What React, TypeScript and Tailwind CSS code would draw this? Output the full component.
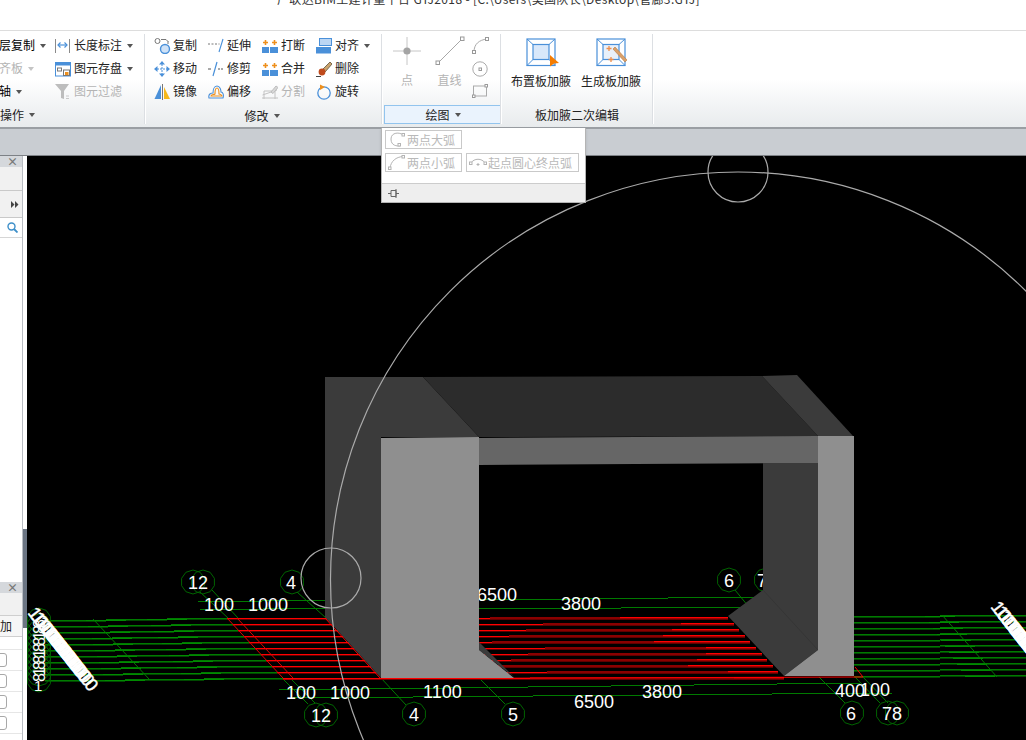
import React from "react";

const B = "#4a90d9";
const O = "#ee8f1c";

function Ic({ children, w = 16, h = 16 }: { children: React.ReactNode; w?: number; h?: number }) {
  return (
    <svg width={w} height={h} viewBox={`0 0 ${w} ${h}`} fill="none" className="shrink-0 block">
      {children}
    </svg>
  );
}

const icons: Record<string, React.ReactNode> = {
  len: (
    <Ic>
      <path d="M0.5 1v14M14.5 1v14" stroke="#8a8a8a" />
      <path d="M3 7h9" stroke={B} strokeWidth="1.2" />
      <path d="M5.5 4.5L3 7l2.5 2.5M9.5 4.5L12 7l-2.5 2.5" stroke={B} strokeWidth="1.2" />
    </Ic>
  ),
  save: (
    <Ic>
      <rect x="0.5" y="1.5" width="15" height="13.5" fill="#fff" stroke={B} />
      <rect x="0.5" y="1.5" width="15" height="3" fill={B} />
      <rect x="2.5" y="7" width="4" height="3" stroke="#777" />
      <rect x="8.5" y="9" width="6" height="5.5" fill="#fff" stroke="#777" />
      <rect x="10" y="11" width="3.5" height="3" fill={O} />
    </Ic>
  ),
  filter: (
    <Ic>
      <path d="M0 0h14L9 7v8L6 14V7z" fill="#bdbdbd" />
      <path d="M11 12h3M11 14.5h3" stroke="#c8c8c8" />
    </Ic>
  ),
  copy: (
    <Ic w={18} h={16}>
      <circle cx="3.5" cy="3" r="2.5" fill="#fff" stroke="#777" />
      <circle cx="11" cy="11" r="4.5" fill="#cfe2f7" stroke={B} strokeWidth="1.4" />
      <path d="M7 1.5h5l2 2M14 3v3" stroke="#777" />
    </Ic>
  ),
  move: (
    <Ic>
      <path d="M8 3v10M3 8h10" stroke={B} strokeWidth="1" strokeDasharray="2 1" />
      <path d="M8 0l3 3.5H5zM8 16l3-3.5H5zM0 8l3.5-3v6zM16 8l-3.5-3v6z" fill={B} />
    </Ic>
  ),
  mirror: (
    <Ic>
      <path d="M7 1L0.5 15H7z" fill={B} />
      <path d="M10 3l6 12h-6z" fill="#f5b81c" />
      <path d="M8.5 0v16" stroke="#777" />
    </Ic>
  ),
  extend: (
    <Ic>
      <path d="M0 6h2M3.5 6h2M7 6h2M10.5 6h1" stroke="#777" />
      <path d="M15 1l-4 13" stroke={B} strokeWidth="1.1" />
    </Ic>
  ),
  trim: (
    <Ic>
      <path d="M0 8h3M10 8h2M13 8h2" stroke="#555" />
      <path d="M9 1L5 15" stroke={B} strokeWidth="1.2" />
    </Ic>
  ),
  offset: (
    <Ic>
      <path d="M1 14c-1-4 2-5 4-5 0-3 1-7 4-7s4 4 4 6c2 0 3 3 2 6z" stroke={B} strokeWidth="1.1" />
      <path d="M3 12c0-2 3-1 4-2 0-2 0-6 2-6s2 4 2 6c1 0 3 1 3 2z" stroke={O} strokeWidth="1.1" />
    </Ic>
  ),
  brk: (
    <Ic>
      <rect x="0" y="9" width="7" height="6" fill={B} />
      <rect x="8" y="9" width="8" height="6" fill={B} />
      <path d="M3.5 2v5M1 4.5h5M12.5 2v5M10 4.5h5" stroke={O} strokeWidth="1.6" />
    </Ic>
  ),
  split: (
    <Ic>
      <path d="M0.5 11L15 6M2 15V7h11v8M0 14h16" stroke="#c2c2c2" />
      <path d="M9 8l5-6 2 1.5-5 6z" fill="#d8d8d8" stroke="#bdbdbd" />
    </Ic>
  ),
  align: (
    <Ic>
      <rect x="3.5" y="0.5" width="12" height="7" fill="#bcd6f3" stroke={B} />
      <rect x="0" y="9" width="15" height="6.5" fill={B} />
    </Ic>
  ),
  del: (
    <Ic>
      <path d="M6 9l8-8 2 2-7 8z" fill="#caa36c" stroke="#7a6a50" />
      <circle cx="6" cy="11" r="3.4" fill="#bf4a1c" />
      <path d="M0 15.5h5" stroke="#444" />
    </Ic>
  ),
  rotate: (
    <Ic>
      <circle cx="8" cy="9" r="6.2" stroke={B} strokeWidth="1.3" />
      <path d="M4 0.5l5 2.5-5 3z" fill={O} />
    </Ic>
  ),
};

function Arrow({ light, className = "" }: { light?: boolean; className?: string }) {
  return (
    <span
      className={`inline-block w-0 h-0 border-x-[3.5px] border-x-transparent border-t-[4px] ${
        light ? "border-t-[#c4c4c4]" : "border-t-[#555]"
      } ${className}`}
    />
  );
}

function Tool({ icon, label, arrow, off }: { icon: string; label: string; arrow?: boolean; off?: boolean }) {
  return (
    <div className="flex items-center h-[23px]">
      <span className="w-[19px] shrink-0">{icons[icon]}</span>
      <span className={`-mt-[2px] ${off ? "text-[#b4b4b4]" : "text-[#222]"}`}>{label}</span>
      {arrow && <Arrow className="ml-[5px]" />}
    </div>
  );
}

function Sep() {
  return <div className="w-[2px] shrink-0 my-[3px] bg-[#dcdfe3] border-r border-white" />;
}

function Caption({ children, arrow }: { children: React.ReactNode; arrow?: boolean }) {
  return (
    <div className="h-[25px] flex items-center justify-center gap-[5px] text-[#222]">
      <span>{children}</span>
      {arrow && <Arrow />}
    </div>
  );
}

function Title() {
  return (
    <div className="h-[31px] bg-white border-b border-[#dddddd] overflow-hidden">
      <div className="pl-[277px] -mt-[10px] h-[18px] leading-[18px] text-[12px] tracking-[0.35px] text-[#333] whitespace-nowrap">
        广联达BIM土建计量平台 GTJ2018 - [C:\Users\美国队长\Desktop\管廊3.GTJ]
      </div>
    </div>
  );
}

function Ribbon() {
  return (
    <div className="relative h-[98px] flex bg-linear-to-b from-white from-50% to-[#e8ebed] border-b-2 border-[#9a9ea3]">
      {/* 操作 */}
      <div className="w-[144px] shrink-0 flex flex-col overflow-hidden">
        <div className="flex-1 flex pt-[3px]">
          <div className="w-[55px] -ml-[1px] shrink-0">
            <div className="flex items-center h-[23px]">
              <span className="-mt-[2px]">层复制</span>
              <Arrow className="ml-[5px]" />
            </div>
            <div className="flex items-center h-[23px] text-[#b4b4b4]">
              <span className="-mt-[2px]">齐板</span>
              <Arrow light className="ml-[5px]" />
            </div>
            <div className="flex items-center h-[23px]">
              <span className="-mt-[2px]">轴</span>
              <Arrow className="ml-[5px]" />
            </div>
          </div>
          <div className="ml-[1px]">
            <Tool icon="len" label="长度标注" arrow />
            <Tool icon="save" label="图元存盘" arrow />
            <Tool icon="filter" label="图元过滤" off />
          </div>
        </div>
        <div className="h-[25px] flex items-center gap-[5px] text-[#222]">
          <span>操作</span>
          <Arrow />
        </div>
      </div>
      <Sep />
      {/* 修改 */}
      <div className="w-[235px] shrink-0 flex flex-col">
        <div className="flex-1 grid grid-cols-[54px_54px_54px_1fr] pl-[8px] pt-[3px] content-start">
          <Tool icon="copy" label="复制" />
          <Tool icon="extend" label="延伸" />
          <Tool icon="brk" label="打断" />
          <Tool icon="align" label="对齐" arrow />
          <Tool icon="move" label="移动" />
          <Tool icon="trim" label="修剪" />
          <Tool icon="brk" label="合并" />
          <Tool icon="del" label="删除" />
          <Tool icon="mirror" label="镜像" />
          <Tool icon="offset" label="偏移" />
          <Tool icon="split" label="分割" off />
          <Tool icon="rotate" label="旋转" />
        </div>
        <div className="pr-[3px]">
          <Caption arrow>修改</Caption>
        </div>
      </div>
      <Sep />
      {/* 绘图 */}
      <div className="w-[117px] shrink-0 flex flex-col">
        <div className="flex-1 flex">
          <div className="w-[48px] flex flex-col items-center pt-[5px]">
            <svg width="30" height="30" viewBox="0 0 30 30" fill="none" className="block">
              <path d="M15 1v28M1 15h28" stroke="#c6c6c6" />
              <circle cx="15" cy="15" r="3.6" fill="#a4a4a4" />
            </svg>
            <span className="text-[#b4b4b4] mt-[8px]">点</span>
          </div>
          <div className="w-[37px] flex flex-col items-center pt-[5px]">
            <svg width="30" height="30" viewBox="0 0 30 30" fill="none" className="block">
              <path d="M3 27L27 3" stroke="#a8a8a8" />
              <rect x="1" y="25" width="3.5" height="3.5" fill="#fff" stroke="#999" />
              <rect x="25.5" y="1" width="3.5" height="3.5" fill="#fff" stroke="#999" />
            </svg>
            <span className="text-[#b4b4b4] mt-[8px]">直线</span>
          </div>
          <div className="flex flex-col items-center w-[18px] pt-[6px] gap-[7px] ml-[3px]">
            <svg width="17" height="17" viewBox="0 0 17 17" fill="none" className="block">
              <path d="M2 15C2 7 7 3 15 2" stroke="#aaa" />
              <rect x="0.5" y="13.5" width="3" height="3" fill="#fff" stroke="#999" />
              <rect x="13.5" y="0.5" width="3" height="3" fill="#fff" stroke="#999" />
            </svg>
            <svg width="16" height="16" viewBox="0 0 16 16" fill="none" className="block">
              <circle cx="8" cy="8" r="7.2" stroke="#aaa" />
              <rect x="7" y="7" width="2.5" height="2.5" fill="#fff" stroke="#999" />
            </svg>
            <svg width="16" height="14" viewBox="0 0 16 14" fill="none" className="block">
              <rect x="1.5" y="2" width="13" height="10" stroke="#aaa" />
              <rect x="0.5" y="11" width="2.5" height="2.5" fill="#fff" stroke="#999" />
              <rect x="13" y="0.5" width="2.5" height="2.5" fill="#fff" stroke="#999" />
            </svg>
          </div>
        </div>
        <div className="h-[19px] mb-[3px] ml-[1px] -mr-[2px] flex items-center justify-center gap-[5px] bg-[#eaf3fd] border border-[#92c4ee] text-[#222]">
          <span>绘图</span>
          <Arrow />
        </div>
      </div>
      <Sep />
      {/* 板加腋 */}
      <div className="w-[150px] shrink-0 flex flex-col">
        <div className="flex-1 flex pl-[9px] gap-[10px]">
          <BigTool label="布置板加腋" kind="cursor" />
          <BigTool label="生成板加腋" kind="wand" />
        </div>
        <Caption>板加腋二次编辑</Caption>
      </div>
      <Sep />
      {/* 下拉面板 */}
      <div className="absolute left-[381px] top-[97px] w-[205px] h-[75px] bg-white border border-[#b4b4b4] border-t-0 shadow-sm flex flex-col text-[#b9b9b9] z-10">
        <div className="flex-1 pl-[3px] pt-[2px]">
          <Arc icon="big" label="两点大弧" className="w-[77px]" />
          <div className="flex gap-[4px] mt-[4px]">
            <Arc icon="small" label="两点小弧" className="w-[77px]" />
            <Arc icon="mid" label="起点圆心终点弧" className="w-[113px]" />
          </div>
        </div>
        <div className="h-[19px] bg-[#eeeeee] border-t border-[#cccccc] flex items-center pl-[6px]">
          <svg width="11" height="11" viewBox="0 0 11 11" fill="none" className="block">
            <path d="M0 5.5h3M3 2.5v6M3 2.5h5v6H3M8 1v9M8 5.5h3" stroke="#666" />
          </svg>
        </div>
      </div>
    </div>
  );
}

function Arc({ icon, label, className }: { icon: string; label: string; className: string }) {
  return (
    <div className={`h-[19px] flex items-center border border-[#c9c9c9] pl-[2px] gap-[1px] ${className}`}>
      <svg width="18" height="15" viewBox="0 0 18 15" fill="none" className="shrink-0 block">
        {icon === "big" && (
          <g stroke="#b4b4b4">
            <path d="M15 3C12 0 3 0 3 7s6 7 9 7" />
            <rect x="14" y="1.5" width="2.5" height="2.5" fill="#fff" />
            <rect x="10" y="11.5" width="2.5" height="2.5" fill="#fff" />
          </g>
        )}
        {icon === "small" && (
          <g stroke="#b4b4b4">
            <path d="M2 13C3 6 8 2 15 1.5" />
            <rect x="0.5" y="12" width="2.5" height="2.5" fill="#fff" />
            <rect x="14" y="0.5" width="2.5" height="2.5" fill="#fff" />
          </g>
        )}
        {icon === "mid" && (
          <g stroke="#b4b4b4">
            <path d="M2 8C5 3 13 3 16 8" />
            <rect x="0.5" y="7" width="2.5" height="2.5" fill="#fff" />
            <rect x="15" y="7" width="2.5" height="2.5" fill="#fff" />
            <path d="M9 8v3M7.5 9.5h3" />
          </g>
        )}
      </svg>
      <span className="whitespace-nowrap">{label}</span>
    </div>
  );
}

function BigTool({ label, kind }: { label: string; kind: "cursor" | "wand" }) {
  return (
    <div className="w-[60px] flex flex-col items-center pt-[7px]">
      <svg width="34" height="30" viewBox="0 0 34 30" fill="none" className="block ml-[3px]">
        <rect x="1" y="1" width="28" height="26.5" fill="#fff" stroke={B} strokeWidth="1.2" />
        <rect x="7" y="6.5" width="16" height="15" fill={kind === "cursor" ? "#d9e8fa" : "#e8f0fa"} stroke={B} strokeWidth="1.2" />
        <path d="M1 1l6 5.5M29 1l-6 5.5M1 27.5l6-6M29 27.5l-6-6" stroke={B} />
        {kind === "cursor" ? (
          <path d="M24 17l9 8-5 .5-4 3z" fill="#f57c00" />
        ) : (
          <g>
            <path d="M17 11l2-2 12 13-2 2z" fill="#d9a06a" stroke="#b97a3f" strokeWidth="0.6" />
            <path d="M13 8v5M10.500 10.500h5M15 19v5M12.500 21.500h5" stroke="#ee8f4c" strokeWidth="1.3" />
          </g>
        )}
      </svg>
      <span className="text-[#222] mt-[7px] whitespace-nowrap">{label}</span>
    </div>
  );
}

function LeftPanel() {
  return (
    <div className="w-[27px] shrink-0 flex bg-white">
      <div className="w-[23px] shrink-0 border-r border-[#b9bdc3] flex flex-col overflow-hidden">
        <div className="h-[11px] bg-[#d5d8dc] flex items-center justify-end pr-[4px] text-[#777] text-[11px] leading-none font-bold">×</div>
        <div className="h-[24px] bg-[#f1f1f1] border-b border-[#c9c9c9]" />
        <div className="h-[27px] bg-[#f1f1f1] border-b border-[#c9c9c9] flex items-center justify-end pr-[3px]">
          <svg width="8" height="7" viewBox="0 0 8 7" className="block">
            <path d="M0 0l3.500 3.500L0 7zM4 0l3.500 3.500L4 7z" fill="#444" />
          </svg>
        </div>
        <div className="h-[20px] bg-white border-b border-[#d6d6d6] flex items-center justify-end pr-[4px]">
          <svg width="11" height="11" viewBox="0 0 11 11" fill="none" className="block">
            <circle cx="4.500" cy="4.500" r="3.500" stroke="#3d8fc9" strokeWidth="1.4" />
            <path d="M7 7l3.500 3.500" stroke="#3d8fc9" strokeWidth="1.8" />
          </svg>
        </div>
        <div className="h-[343px] bg-white" />
        <div className="h-[11px] bg-[#d5d8dc] mt-[1px] flex items-center justify-end pr-[4px] text-[#777] text-[11px] leading-none font-bold">×</div>
        <div className="h-[22px] bg-[#f1f1f1]" />
        <div className="h-[22px] bg-[#f6f6f6] border-y border-[#cfcfcf] flex items-center text-[#222] pr-[2px]">
          <span>加</span>
        </div>
        <div className="h-[13px] border-b border-[#e6e6e6]" />
        {[0, 1, 2, 3].map((k) => (
          <div key={k} className="h-[21px] border-b border-[#e6e6e6] flex items-center">
            <span className="block w-[20px] h-[14px] -ml-[13px] bg-white border border-[#a8a8a8] rounded-[3px]" />
          </div>
        ))}
      </div>
      <div className="flex-1 flex flex-col">
        <div className="h-[373px]" />
        <div className="h-[99px] bg-[#6b7583]" />
      </div>
    </div>
  );
}

function deca(cx: number, cy: number, r: number) {
  const p: string[] = [];
  for (let i = 0; i < 10; i++) {
    const a = (i * Math.PI) / 5 + Math.PI / 10;
    p.push(`${(cx + r * Math.cos(a)).toFixed(1)},${(cy + r * Math.sin(a)).toFixed(1)}`);
  }
  return p.join(" ");
}

function Bubble({ x, y, r = 12 }: { x: number; y: number; r?: number }) {
  return <polygon points={deca(x, y, r)} fill="none" stroke="#006400" strokeWidth="1" />;
}

function Lb({ x, y, t, size = 18 }: { x: number; y: number; t: string; size?: number }) {
  return (
    <text x={x} y={y} fill="#fff" fontSize={size} fontFamily="'Liberation Sans', sans-serif">
      {t}
    </text>
  );
}

const range = (n: number) => Array.from({ length: n }, (_, i) => i);

// 近水平线：按整数行分段，得到无抗锯齿的阶梯线
function steps(x0: number, y0: number, x1: number, y1: number) {
  const n = Math.max(1, Math.abs(Math.round(y1 - y0)) + 1);
  const w = (x1 - x0) / n;
  let d = "";
  for (let i = 0; i < n; i++) {
    const y = Math.round(y0 + ((y1 - y0) * i) / Math.max(1, n - 1)) + 0.5;
    d += `M${(x0 + w * i).toFixed(0)} ${y}H${(x0 + w * (i + 1)).toFixed(0)}`;
  }
  return d;
}

function Canvas() {
  const green = "#007a00";
  const shade = "#004800";
  const bright = "#008a00";
  return (
    <div className="flex-1 bg-black overflow-hidden">
      <svg width="999" height="584" viewBox="27 156 999 584" className="block">
        {/* 左侧绿色钢筋线 */}
        {range(11).map((i) => {
          const y = 620 + i * 6;
          const xe = 228 + i * 5.6;
          const t = 45 + (xe - 45) / 3;
          return (
            <g key={`lg${i}`} shapeRendering="crispEdges">
              <path d={steps(45, y + 1, xe, y - 1)} stroke={shade} />
              <path d={steps(45, y, xe, y - 2)} stroke={green} />
              <path d={`M${Math.round(t - 20)} ${y + 0.5}h40M${Math.round(t - 20 + (xe - 45) / 3)} ${y - 0.5}h40`} stroke={bright} />
            </g>
          );
        })}
        <path d="M93 619L149 679" stroke={green} />
        {/* 右侧绿色钢筋线 */}
        {range(11).map((i) => {
          const y = 616 + i * 6;
          return (
            <g key={`rg${i}`} shapeRendering="crispEdges">
              <path d={steps(854, y + 1, 1026, y)} stroke={shade} />
              <path d={steps(854, y, 1026, y - 1)} stroke={green} />
              <path d={`M${925 + i * 4} ${y + 0.5}h30`} stroke={bright} />
            </g>
          );
        })}
        <path d="M942 615L997 677" stroke={green} />
        {/* 标注线 */}
        <g shapeRendering="crispEdges" stroke={green} fill="none">
          <path d={steps(198, 601, 326, 600)} />
          <path d={steps(200, 609, 326, 608)} />
          <path d={steps(479, 599, 763, 597)} />
          <path d={steps(479, 608, 763, 607)} />
          <path d={steps(279, 689, 860, 683)} />
          <path d={steps(293, 697, 892, 693)} />
        </g>
        {/* 轴线引线 */}
        <path d="M200 592L228 618M212 590L238 618M297 592L326 618" stroke={green} />
        <path d="M291 679L315 703M282 678L308 704M381 678L406 705M479 678L505 704M819 677L845 703M855 677L880 703M863 677L888 703M735 590L753 612" stroke={green} />
        {/* 红色钢筋 */}
        {range(11).map((i) => {
          const y = 618 + i * 6;
          const xl = 227 + i * 5.6;
          const xm = 728 + i * 5.6;
          const ds = 490 + ((i * 53) % 70);
          const de = Math.min(ds + 130 + i * 8, Math.round(xm) - 50);
          return (
            <g key={`r${i}`} shapeRendering="crispEdges" fill="none">
              <path d={`M${Math.round(xl)} ${y + 1.5}H${Math.round(xm)}`} stroke="#600000" />
              <path d={`M${Math.round(xl)} ${y + 0.5}H${ds}`} stroke="#ff0000" />
              <path d={`M${ds} ${y + 0.5}H${de}M${ds} ${y - 0.5}H${de}`} stroke="#8a0000" />
              <path d={`M${de} ${y - 0.5}H${Math.round(xm)}`} stroke="#ff0000" />
              <path d={`M${de} ${y + 0.5}H${Math.round(xm)}`} stroke="#a00000" />
            </g>
          );
        })}
        <path d="M227 618L283 678M237 618L293 678" stroke="#e00000" />
        <path d="M325 618L381 679" stroke="#ff0000" />
        <path d="M283 679L855 677L863 677L855 667" stroke="#ff0000" fill="none" />
        {/* 轴号圈 */}
        <Bubble x={193} y={582} />
        <Bubble x={203} y={582} />
        <Bubble x={292} y={582} />
        <Bubble x={729} y={580} />
        <Bubble x={766} y={580} />
        <Bubble x={316} y={715} />
        <Bubble x={326} y={715} />
        <Bubble x={414} y={714} />
        <Bubble x={513} y={714} />
        <Bubble x={852} y={713} />
        <Bubble x={888} y={713} />
        <Bubble x={897} y={713} />
        {range(11).map((i) => (
          <Bubble key={`c${i}`} x={39} y={620 + i * 6} />
        ))}
        {/* 文字 */}
        <Lb x={188} y={589} t="12" />
        <Lb x={286} y={589} t="4" />
        <Lb x={204} y={611} t="100" />
        <Lb x={248} y={611} t="1000" />
        <Lb x={477} y={601} t="6500" />
        <Lb x={561} y={610} t="3800" />
        <Lb x={724} y={587} t="6" />
        <Lb x={757} y={587} t="7" />
        <Lb x={286} y={699} t="100" />
        <Lb x={330} y={699} t="1000" />
        <Lb x={423} y={698} t="1100" />
        <Lb x={574} y={708} t="6500" />
        <Lb x={642} y={698} t="3800" />
        <Lb x={835} y={697} t="400" />
        <Lb x={860} y={696} t="100" />
        <Lb x={311} y={722} t="12" />
        <Lb x={409} y={721} t="4" />
        <Lb x={508} y={721} t="5" />
        <Lb x={846} y={720} t="6" />
        <Lb x={882} y={720} t="78" />
        {/* 左端重叠文字 */}
        {range(10).map((i) => (
          <text
            key={`v${i}`}
            transform={`translate(45 ${628 + i * 6}) rotate(-90)`}
            fill="#fff"
            fontSize="16"
            fontFamily="'Liberation Sans', sans-serif"
          >
            {i % 3 === 2 ? "1" : "8"}
          </text>
        ))}
        <Lb x={34} y={691} t="1" size={15} />
        {range(11).map((i) => (
          <text
            key={`d${i}`}
            transform={`translate(${27 + i * 3.8} ${613 + i * 4.8}) rotate(52)`}
            fill="#fff"
            stroke="#fff"
            strokeWidth="0.4"
            fontSize="18"
            fontFamily="'Liberation Sans', sans-serif"
          >
            1000
          </text>
        ))}
        {range(11).map((i) => (
          <text
            key={`e${i}`}
            transform={`translate(${990 + i * 3.8} ${607 + i * 4.8}) rotate(52)`}
            fill="#fff"
            stroke="#fff"
            strokeWidth="0.4"
            fontSize="18"
            fontFamily="'Liberation Sans', sans-serif"
          >
            1000
          </text>
        ))}
        {/* 三维构件 */}
        <polygon points="325,377 423,377 479,437 381,437 381,678 325,617" fill="#3b3b3b" />
        <polygon points="423,377 762,376 818,436 479,437" fill="#2c2c2c" />
        <polygon points="762,376 797,375 853,436 818,436" fill="#3b3b3b" />
        <polygon points="479,438 818,436 818,463 479,465" fill="#666666" />
        <polygon points="763,463 818,463 818,650 784,676 728,616 763,590" fill="#3b3b3b" />
        <path d="M763 590L818 650" stroke="#353535" />
        <polygon points="479,642 514,677 479,650" fill="#3b3b3b" />
        <polygon points="381,438 479,437 479,650 514,678 381,678" fill="#8f8f8f" />
        <polygon points="818,436 854,436 854,676 784,676 818,650" fill="#8f8f8f" />
        {/* 白色旋转控制圈 */}
        <g fill="none" stroke="#aaaaaa" strokeWidth="1.2">
          <circle cx="738" cy="579.5" r="407.5" />
          <circle cx="738" cy="172" r="30" />
          <circle cx="331" cy="578" r="30" />
        </g>
      </svg>
    </div>
  );
}

export default function App() {
  return (
    <div
      className="w-[1026px] h-[740px] overflow-hidden flex flex-col bg-white text-[12px] leading-none"
      style={{ fontFamily: "'Noto Sans CJK SC', 'Liberation Sans', sans-serif" }}
    >
      <Title />
      <Ribbon />
      <div className="h-[27px] bg-[#c9cdd2] border-b border-[#7d8186] shrink-0" />
      <div className="flex-1 flex min-h-0">
        <LeftPanel />
        <Canvas />
      </div>
    </div>
  );
}
